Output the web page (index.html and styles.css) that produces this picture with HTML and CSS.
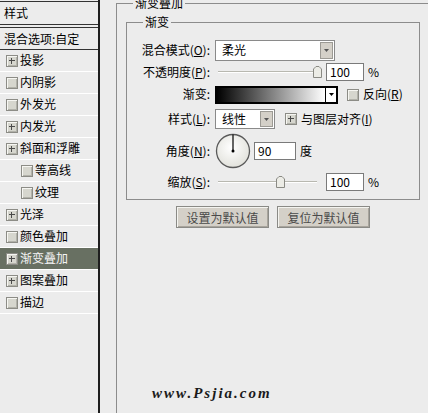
FILE: index.html
```html
<!DOCTYPE html>
<html lang="zh-CN">
<head>
  <meta charset="UTF-8" />
  <title>图层样式 - 渐变叠加</title>
  <link rel="stylesheet" href="styles.css">
</head>
<body>

<div class="app">
  <div class="side">
    <div class="side-title">样式</div>
    <div class="side-blend">混合选项:自定</div>
    <ul class="fx-list">
      <li><span class="chk on"></span>投影</li>
      <li><span class="chk"></span>内阴影</li>
      <li><span class="chk"></span>外发光</li>
      <li><span class="chk on"></span>内发光</li>
      <li><span class="chk on"></span>斜面和浮雕</li>
      <li class="sub"><span class="chk"></span>等高线</li>
      <li class="sub"><span class="chk"></span>纹理</li>
      <li><span class="chk on"></span>光泽</li>
      <li><span class="chk"></span>颜色叠加</li>
      <li class="active"><span class="chk on"></span>渐变叠加</li>
      <li><span class="chk on"></span>图案叠加</li>
      <li><span class="chk"></span>描边</li>
    </ul>
  </div>

  <div class="main">
    <fieldset class="group outer">
      <legend>渐变叠加</legend>

      <fieldset class="group inner">
        <legend>渐变</legend>

        <div class="row r1">
          <label>混合模式(<u>O</u>):</label>
          <div class="select w-blend">
            <span>柔光</span>
            <i class="drop"><svg width="5" height="3" viewBox="0 0 5 3"><path d="M0 0h5L2.5 3z" fill="#555"/></svg></i>
          </div>
        </div>

        <div class="row r2">
          <label>不透明度(<u>P</u>):</label>
          <div class="slider">
            <div class="track"></div>
            <svg class="thumb" style="left: 98px" width="9" height="13" viewBox="0 0 9 13"><path d="M0.5 12.5V4L3 1.5h3L8.5 4v8.5z" fill="#ecece6" stroke="#8a8a84"/></svg>
          </div>
          <div class="num">100</div>
          <span class="unit">%</span>
        </div>

        <div class="row r3">
          <label>渐变:</label>
          <div class="grad">
            <div class="ramp"></div>
            <i class="gdrop"><svg width="5" height="3" viewBox="0 0 5 3"><path d="M0 0h5L2.5 3z" fill="#000"/></svg></i>
          </div>
          <span class="chk opt"></span>
          <span class="opt-text">反向(<u>R</u>)</span>
        </div>

        <div class="row r4">
          <label>样式(<u>L</u>):</label>
          <div class="select w-style">
            <span>线性</span>
            <i class="drop"><svg width="5" height="3" viewBox="0 0 5 3"><path d="M0 0h5L2.5 3z" fill="#555"/></svg></i>
          </div>
          <span class="chk on align"></span>
          <span class="opt-text">与图层对齐(<u>I</u>)</span>
        </div>

        <div class="row r5">
          <label>角度(<u>N</u>):</label>
          <svg class="dial" width="36" height="36" viewBox="0 0 36 36">
            <defs>
              <radialGradient id="dialFill" cx="0.45" cy="0.4" r="0.6">
                <stop offset="0" stop-color="#ffffff"/>
                <stop offset="1" stop-color="#e2e2dc"/>
              </radialGradient>
            </defs>
            <circle cx="18" cy="18" r="16.5" fill="url(#dialFill)" stroke="#5a5a5a" stroke-width="1.3"/>
            <line x1="18" y1="18" x2="18" y2="1.5" stroke="#000" stroke-width="1.2"/>
            <circle cx="18" cy="18" r="1.5" fill="#000"/>
          </svg>
          <div class="num angle">90</div>
          <span class="unit">度</span>
        </div>

        <div class="row r6">
          <label>缩放(<u>S</u>):</label>
          <div class="slider">
            <div class="track"></div>
            <svg class="thumb" style="left: 61px" width="9" height="13" viewBox="0 0 9 13"><path d="M0.5 12.5V4L3 1.5h3L8.5 4v8.5z" fill="#ecece6" stroke="#8a8a84"/></svg>
          </div>
          <div class="num">100</div>
          <span class="unit">%</span>
        </div>
      </fieldset>

      <div class="btns">
        <button>设置为默认值</button>
        <button>复位为默认值</button>
      </div>

      <div class="mark">www.Psjia.com</div>
    </fieldset>
  </div>
</div>

</body>
</html>
```

FILE: styles.css
```css
body { margin: 0; background: #ececec; color: #000; font: 12px/1.2 "Noto Sans CJK SC", "Liberation Sans", sans-serif; overflow: hidden; }
u { text-decoration: underline; text-underline-offset: 1px; }

.app { display: flex; height: 413px; }

/* left: effect list */
.side { width: 98px; flex: none; border-right: 2px solid #1e1e1e; }
.side-title { margin-top: 1px; height: 22px; line-height: 22px; padding-left: 4px; border-top: 1px solid #333; border-bottom: 1px solid #333; }
.side-blend { margin-top: 2px; height: 21px; line-height: 21px; padding-left: 4px; border-top: 1px solid #333; border-bottom: 1px solid #333; }
.fx-list { list-style: none; margin: 0; padding: 0; }
.fx-list li { height: 21px; display: flex; align-items: center; gap: 2px; padding-left: 6px; border-bottom: 1px solid #fff; }
.fx-list li.sub { padding-left: 21px; }
.fx-list li.active { background: #687062; color: #f4f4f4; }

.chk { position: relative; flex: none; width: 12px; height: 12px; box-sizing: border-box; border: 1px solid #8c8c86; background: #d6d6ce; box-shadow: inset 1px 1px 0 #f6f6f2, inset -1px -1px 0 #b2b2aa; }
.chk.on::before { content: ""; position: absolute; left: 2px; top: 4px; width: 6px; height: 1px; background: #4a4a4a; }
.chk.on::after { content: ""; position: absolute; left: 4px; top: 2px; width: 1px; height: 6px; background: #4a4a4a; }

/* right: settings */
.main { flex: 1; overflow: hidden; }
.group { margin: 0; border: 1px solid #8c8c8c; min-width: 0; }
.group legend { padding: 0 2px; line-height: 14px; }
.outer { width: 340px; height: 440px; box-sizing: border-box; margin: -4px 0 0 16px; padding: 0 0 0 9px; }
.outer > legend { margin-left: 7px; }
.inner { width: 294px; box-sizing: border-box; margin-top: 5px; padding: 10px 0 5px 0; }
.inner > legend { margin-left: 16px; }

.row { display: flex; align-items: center; }
.row label { flex: none; width: 83px; margin-right: 5px; text-align: right; }
.r1 { height: 22px; }
.r2 { height: 22px; }
.r3 { height: 23px; }
.r4 { height: 26px; }
.r5 { height: 38px; }
.r6 { height: 24px; }

.select { flex: none; display: flex; align-items: center; height: 21px; box-sizing: border-box; padding-left: 6px; border: 1px solid #8a8a8a; background: #fff; }
.select span { flex: 1; }
.select .drop { align-self: stretch; width: 11px; margin: 1px; border: 1px solid #9c9a94; background: #d4d0c8; display: flex; align-items: center; justify-content: center; }
.w-blend { width: 120px; }
.w-style { width: 60px; height: 20px; }

.slider { position: relative; flex: none; width: 108px; height: 16px; display: flex; align-items: center; padding: 0 6px 0 3px; box-sizing: border-box; }
.slider .track { flex: 1; border-top: 1px solid #b8b8b0; border-bottom: 1px solid #fff; }
.slider .thumb { position: absolute; top: 1px; }

.num { flex: none; width: 38px; height: 18px; box-sizing: border-box; margin-left: 3px; padding-left: 3px; line-height: 16px; border: 1px solid #7a7a7a; background: #fff; }
.num.angle { width: 42px; }
.unit { margin-left: 4px; }

.grad { flex: none; display: flex; width: 123px; height: 18px; box-sizing: border-box; border: 2px solid #000; }
.grad .ramp { flex: 1; background: linear-gradient(to right, #000, #fff); }
.grad .gdrop { width: 10px; border-left: 1px solid #000; background: #fff; display: flex; align-items: center; justify-content: center; }
.chk.opt { margin-left: 9px; }
.chk.align { margin-left: 10px; }
.opt-text { margin-left: 4px; }

.dial { flex: none; margin-left: 0; }

.btns { width: 294px; display: flex; justify-content: center; gap: 8px; margin-top: 6px; }
.btns button { width: 93px; height: 22px; padding: 0; border: 1px solid #8a8a86; background: #d4d0c8; box-shadow: inset 1px 1px 0 #f4f4f0, inset -1px -1px 0 #a8a49c; color: #4a4a4a; font: 12px "Noto Sans CJK SC", sans-serif; }

.mark { margin: 157px 0 0 26px; font: italic bold 15px/17px "Liberation Serif", serif; letter-spacing: 2px; color: #1a1a1a; }
```
